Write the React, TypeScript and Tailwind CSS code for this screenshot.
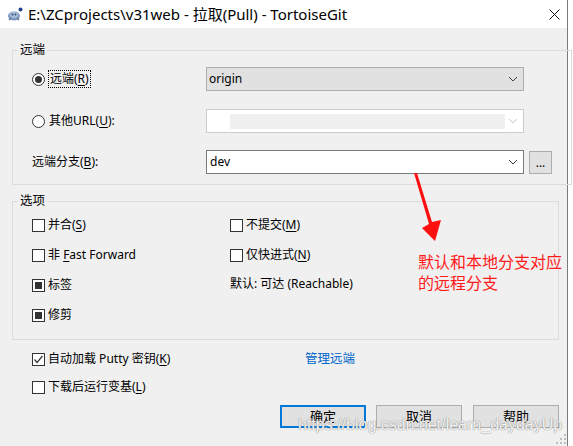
import React from "react"

function Chevron({ light }: { light?: boolean }) {
  return (
    <svg width="10" height="6" viewBox="0 0 10 6" className="shrink-0">
      <polyline points="1,1 5,5 9,1" fill="none" stroke={light ? "#c8c8c8" : "#404040"} strokeWidth="1" />
    </svg>
  )
}

function Radio({ checked }: { checked?: boolean }) {
  return (
    <span className="w-[13px] h-[13px] shrink-0 rounded-full border border-[#333] bg-white flex items-center justify-center">
      {checked && <span className="w-[7px] h-[7px] rounded-full bg-[#333]" />}
    </span>
  )
}

function Box({ state }: { state?: "check" | "mixed" }) {
  return (
    <span className="w-[13px] h-[13px] shrink-0 border border-[#333] bg-white flex items-center justify-center">
      {state === "mixed" && <span className="w-[7px] h-[7px] bg-[#333]" />}
      {state === "check" && (
        <svg width="11" height="11" viewBox="0 0 11 11">
          <polyline points="1.5,5.5 4,8.5 9.5,2" fill="none" stroke="#333" strokeWidth="1.2" />
        </svg>
      )}
    </span>
  )
}

function Check({ state, children }: { state?: "check" | "mixed"; children: React.ReactNode }) {
  return (
    <div className="flex items-center">
      <Box state={state} />
      <span className="ml-[3px] leading-[16px]">{children}</span>
    </div>
  )
}

function TortoiseIcon() {
  return (
    <svg width="16" height="15" viewBox="0 0 16 15" className="shrink-0">
      <ellipse cx="7" cy="9" rx="6" ry="4.5" fill="#7f9cc0" />
      <ellipse cx="7" cy="8" rx="4" ry="3" fill="#a9c0dc" />
      <circle cx="5.5" cy="7.5" r="1" fill="#2c4a78" />
      <circle cx="8.5" cy="7.5" r="1" fill="#2c4a78" />
      <path d="M2 13 L4 11 M12 13 L10 11" stroke="#5c7aa3" strokeWidth="1.5" />
      <circle cx="13.5" cy="2.5" r="2" fill="#1f3f8a" />
    </svg>
  )
}

const btn = "w-[86px] h-[23px] bg-[#e1e1e1] flex items-center justify-center"

export default function App() {
  return (
    <div className="relative w-[573px] h-[446px] bg-white overflow-hidden font-['Noto_Sans','Noto_Sans_CJK_SC',sans-serif] text-[12px] text-black">
      <div className="w-[568px] h-full border-r border-[#7a7a7a] flex flex-col bg-[#f0f0f0]">
        {/* Title bar */}
        <div className="h-[28px] bg-white flex items-center shrink-0">
          <span className="ml-[7px]">
            <TortoiseIcon />
          </span>
          <span className="ml-[5px] text-[15px] leading-none">E:\ZCprojects\v31web - 拉取(Pull) - TortoiseGit</span>
          <svg width="11" height="11" viewBox="0 0 11 11" className="ml-auto mr-[7px]">
            <path d="M0.5 0.5 L10.5 10.5 M10.5 0.5 L0.5 10.5" stroke="#111" strokeWidth="1" />
          </svg>
        </div>

        {/* 远端 */}
        <fieldset className="mt-[15px] ml-[12px] w-[547px] border border-[#dcdcdc] px-[19px] pt-[10px] pb-[10px]">
          <legend className="-ml-[14px] px-[2px] leading-[14px] text-[12.5px]">远端</legend>
          <div className="flex items-center h-[24px]">
            <div className="w-[174px] flex items-center">
              <Radio checked />
              <span className="ml-[3px] border border-dotted border-black px-[1px] leading-[16px]">
                远端(<u className="underline-offset-2">R</u>)
              </span>
            </div>
            <div className="w-[318px] h-[24px] bg-[#e1e1e1] border border-[#adadad] flex items-center pl-[2px] pr-[5px]">
              <span className="flex-1">origin</span>
              <Chevron />
            </div>
          </div>
          <div className="flex items-center h-[24px] mt-[18px]">
            <div className="w-[174px] flex items-center">
              <Radio />
              <span className="ml-[4px] leading-[16px]">
                其他URL(<u className="underline-offset-2">U</u>):
              </span>
            </div>
            <div className="w-[318px] h-[24px] bg-white border border-[#cccccc] flex items-center pr-[5px]">
              <span className="ml-[23px] w-[275px] h-[15px] bg-[#f0f0f0]" />
              <span className="ml-auto">
                <Chevron light />
              </span>
            </div>
          </div>
          <div className="flex items-center h-[24px] mt-[17px]">
            <div className="w-[174px] leading-[16px]">
              远端分支(<u className="underline-offset-2">B</u>):
            </div>
            <div className="w-[318px] h-[24px] bg-white border border-[#7a7a7a] flex items-center pl-[3px] pr-[5px]">
              <span className="flex-1">dev</span>
              <Chevron />
            </div>
            <div className="ml-[5px] w-[23px] h-[23px] bg-[#e1e1e1] border border-[#adadad] flex items-center justify-center leading-none pt-[2px]">
              ...
            </div>
          </div>
        </fieldset>

        {/* 选项 */}
        <fieldset className="mt-[9px] ml-[12px] w-[547px] border border-[#dcdcdc] px-[19px] pt-[2px] pb-[9px]">
          <legend className="-ml-[14px] px-[2px] leading-[14px] text-[12.5px]">选项</legend>
          <div className="grid grid-cols-[198px_1fr] auto-rows-[30px] items-center">
            <Check>
              并合(<u className="underline-offset-2">S</u>)
            </Check>
            <Check>
              不提交(<u className="underline-offset-2">M</u>)
            </Check>
            <Check>
              非 <u className="underline-offset-2">F</u>ast Forward
            </Check>
            <Check>
              仅快进式(<u className="underline-offset-2">N</u>)
            </Check>
            <Check state="mixed">标签</Check>
            <div className="leading-[16px] -mt-[2px]">默认: 可达 (Reachable)</div>
            <Check state="mixed">修剪</Check>
            <div />
          </div>
        </fieldset>

        {/* bottom options */}
        <div className="ml-[32px] mt-[7px] h-[24px] flex items-center">
          <div className="w-[273px]">
            <Check state="check">
              自动加载 Putty 密钥(<u className="underline-offset-2">K</u>)
            </Check>
          </div>
          <span className="text-[#0066cc] leading-[16px] text-[12.5px]">管理远端</span>
        </div>
        <div className="ml-[32px] mt-[4px] h-[24px] flex items-center">
          <Check>
            下载后运行变基(<u className="underline-offset-2">L</u>)
          </Check>
        </div>

        {/* buttons */}
        <div className="mt-[6px] pl-[280px] flex text-[13px]">
          <div className={`${btn} border-2 border-[#0078d7]`}>确定</div>
          <div className={`${btn} ml-[10px] border border-[#adadad]`}>取消</div>
          <div className={`${btn} ml-[11px] border border-[#adadad]`}>帮助</div>
        </div>
      </div>

      {/* size grip */}
      <svg width="10" height="10" viewBox="0 0 10 10" className="absolute left-[556px] top-[434px]">
        <rect x="8" y="0" width="2" height="2" fill="#bcbcbc" />
        <rect x="4" y="4" width="2" height="2" fill="#bcbcbc" />
        <rect x="8" y="4" width="2" height="2" fill="#bcbcbc" />
        <rect x="0" y="8" width="2" height="2" fill="#bcbcbc" />
        <rect x="4" y="8" width="2" height="2" fill="#bcbcbc" />
        <rect x="8" y="8" width="2" height="2" fill="#bcbcbc" />
      </svg>

      {/* red annotation */}
      <svg width="573" height="446" className="absolute left-0 top-0 pointer-events-none">
        <polygon points="414,173 417,173 432,222 441,220 435,241 422,228 429,224" fill="#ff1010" />
      </svg>
      <div className="absolute left-[418px] top-[251px] text-[16px] leading-[21px] text-[#ff1a1a] font-['Noto_Sans_CJK_SC',sans-serif]">
        默认和本地分支对应
        <br />
        的远程分支
      </div>

      {/* watermark */}
      <div className="absolute left-[298px] top-[416px] text-[16px] leading-[18px] text-white/90 font-['Liberation_Sans',sans-serif] [text-shadow:0_0_1px_#8a8a8a,0_0_1px_#8a8a8a] pointer-events-none">
        https://blog.csdn.net/learn_daydayUp
      </div>
    </div>
  )
}
